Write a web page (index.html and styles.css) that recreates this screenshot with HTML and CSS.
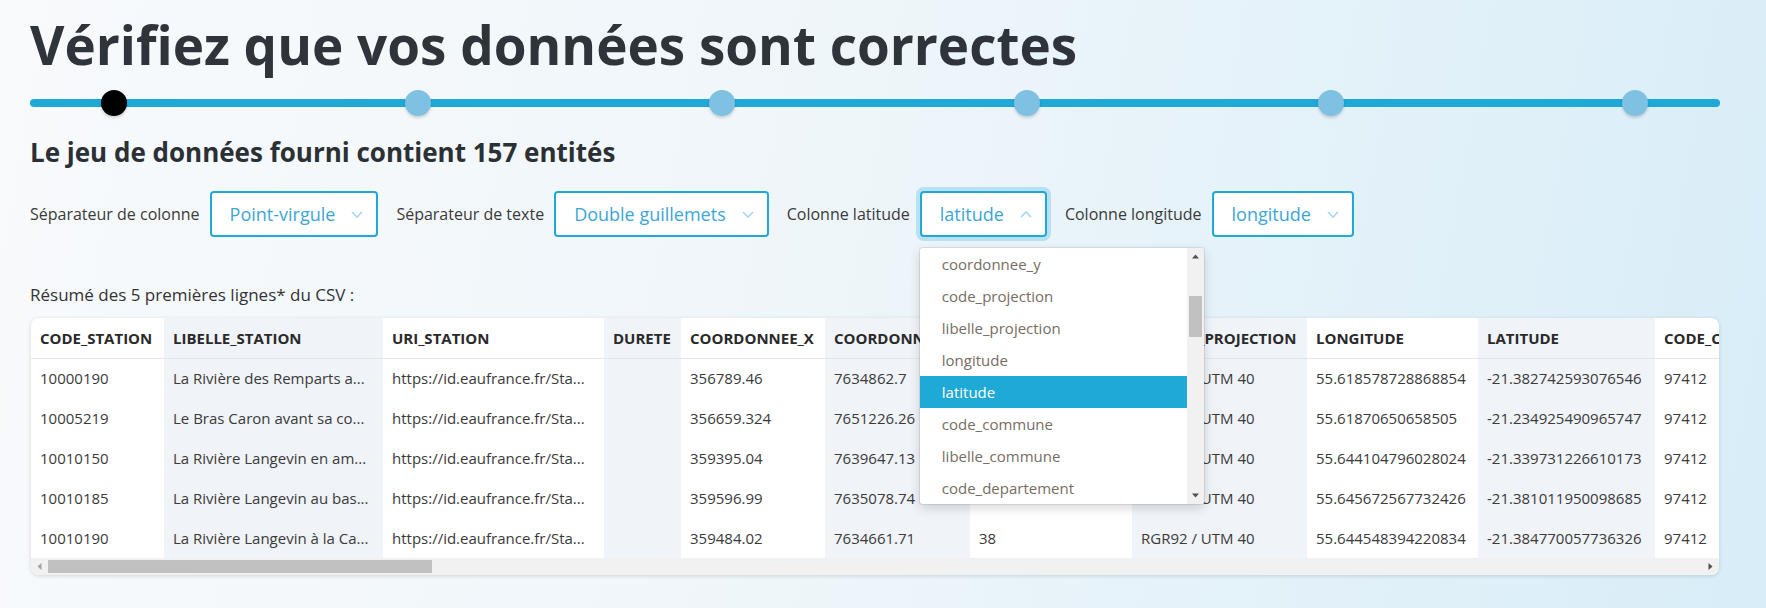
FILE: index.html
```html
<!DOCTYPE html>
<html lang="fr">
<head>
<meta charset="utf-8">
<title>Vérifiez vos données</title>
<link rel="stylesheet" href="styles.css">
</head>
<body>
<main class="page">
  <h1 class="title">Vérifiez que vos données sont correctes</h1>

  <div class="stepper">
    <span class="dot dot-current"></span>
    <span class="dot"></span>
    <span class="dot"></span>
    <span class="dot"></span>
    <span class="dot"></span>
    <span class="dot"></span>
  </div>

  <h2 class="subtitle">Le jeu de données fourni contient 157 entités</h2>

  <div class="filters">
    <span class="flabel">Séparateur de colonne</span>
    <div class="select">
      <span class="select-value">Point-virgule</span>
      <svg class="chev" viewBox="0 0 12 7"><path d="M1 1l5 5 5-5"/></svg>
    </div>

    <span class="flabel">Séparateur de texte</span>
    <div class="select">
      <span class="select-value">Double guillemets</span>
      <svg class="chev" viewBox="0 0 12 7"><path d="M1 1l5 5 5-5"/></svg>
    </div>

    <span class="flabel">Colonne latitude</span>
    <div class="select-wrap">
      <div class="select select-open">
        <span class="select-value">latitude</span>
        <svg class="chev" viewBox="0 0 12 7"><path d="M1 6l5-5 5 5"/></svg>
      </div>
      <div class="listbox">
        <ul class="options">
          <li class="option">coordonnee_y</li>
          <li class="option">code_projection</li>
          <li class="option">libelle_projection</li>
          <li class="option">longitude</li>
          <li class="option option-selected">latitude</li>
          <li class="option">code_commune</li>
          <li class="option">libelle_commune</li>
          <li class="option">code_departement</li>
        </ul>
        <div class="vscroll">
          <span class="sb-btn"><svg viewBox="0 0 17 17"><path d="M5 10.5h7L8.5 6.5z"/></svg></span>
          <span class="vtrack"><span class="vthumb"></span></span>
          <span class="sb-btn"><svg viewBox="0 0 17 17"><path d="M5 6.5h7L8.5 10.5z"/></svg></span>
        </div>
      </div>
    </div>

    <span class="flabel">Colonne longitude</span>
    <div class="select">
      <span class="select-value">longitude</span>
      <svg class="chev" viewBox="0 0 12 7"><path d="M1 1l5 5 5-5"/></svg>
    </div>
  </div>

  <p class="summary">Résumé des 5 premières lignes* du CSV :</p>

  <div class="table-card">
    <div class="table-clip">
      <table class="data">
        <colgroup>
          <col class="w1"><col class="w2"><col class="w3"><col class="w4"><col class="w5"><col class="w6">
          <col class="w7"><col class="w8"><col class="w9"><col class="w10"><col class="w11">
        </colgroup>
        <thead>
          <tr>
            <th>CODE_STATION</th><th>LIBELLE_STATION</th><th>URI_STATION</th><th>DURETE</th>
            <th>COORDONNEE_X</th><th>COORDONNEE_Y</th><th>CODE_PROJECTION</th><th>LIBELLE_PROJECTION</th>
            <th>LONGITUDE</th><th>LATITUDE</th><th>CODE_COMMUNE</th>
          </tr>
        </thead>
        <tbody>
          <tr>
            <td>10000190</td><td>La Rivière des Remparts a...</td><td>https://id.eaufrance.fr/Sta...</td><td></td>
            <td>356789.46</td><td>7634862.7</td><td>38</td><td>RGR92 / UTM 40</td>
            <td>55.618578728868854</td><td>-21.382742593076546</td><td>97412</td>
          </tr>
          <tr>
            <td>10005219</td><td>Le Bras Caron avant sa co...</td><td>https://id.eaufrance.fr/Sta...</td><td></td>
            <td>356659.324</td><td>7651226.26</td><td>38</td><td>RGR92 / UTM 40</td>
            <td>55.61870650658505</td><td>-21.234925490965747</td><td>97412</td>
          </tr>
          <tr>
            <td>10010150</td><td>La Rivière Langevin en am...</td><td>https://id.eaufrance.fr/Sta...</td><td></td>
            <td>359395.04</td><td>7639647.13</td><td>38</td><td>RGR92 / UTM 40</td>
            <td>55.644104796028024</td><td>-21.339731226610173</td><td>97412</td>
          </tr>
          <tr>
            <td>10010185</td><td>La Rivière Langevin au bas...</td><td>https://id.eaufrance.fr/Sta...</td><td></td>
            <td>359596.99</td><td>7635078.74</td><td>38</td><td>RGR92 / UTM 40</td>
            <td>55.645672567732426</td><td>-21.381011950098685</td><td>97412</td>
          </tr>
          <tr>
            <td>10010190</td><td>La Rivière Langevin à la Ca...</td><td>https://id.eaufrance.fr/Sta...</td><td></td>
            <td>359484.02</td><td>7634661.71</td><td>38</td><td>RGR92 / UTM 40</td>
            <td>55.644548394220834</td><td>-21.384770057736326</td><td>97412</td>
          </tr>
        </tbody>
      </table>
    </div>
    <div class="hscroll">
      <span class="sb-btn sb-disabled"><svg viewBox="0 0 17 17"><path d="M10.5 5v7L6.5 8.5z"/></svg></span>
      <span class="htrack"><span class="hthumb"></span></span>
      <span class="sb-btn"><svg viewBox="0 0 17 17"><path d="M6.5 5v7l4-3.5z"/></svg></span>
    </div>
  </div>
</main>
</body>
</html>
```

FILE: styles.css
```css
* { box-sizing: border-box; }

html, body { margin: 0; }

body {
  width: 1766px;
  height: 608px;
  overflow: hidden;
  font-family: "Open Sans", "Liberation Sans", sans-serif;
  color: #333;
  background: linear-gradient(100deg, #f8fafc 0%, #eff6fa 45%, #d8edf8 100%);
}

.page {
  padding: 15px 46px 0 30px;
}

.title {
  margin: 0;
  font-size: 53px;
  line-height: 60px;
  font-weight: 700;
  color: #2e343a;
}

/* stepper */
.stepper {
  position: relative;
  display: flex;
  justify-content: space-between;
  height: 26px;
  margin-top: 15px;
  padding: 0 72px 0 71px;
}
.stepper::before {
  content: "";
  position: absolute;
  left: 0;
  right: 0;
  top: 9px;
  height: 8px;
  border-radius: 4px;
  background: #1fa9d6;
}
.dot {
  position: relative;
  width: 26px;
  height: 26px;
  border-radius: 50%;
  background: #7ec1e3;
  box-shadow: 0 2px 3px rgba(0, 0, 0, 0.16);
}
.dot-current { background: #000; }

.subtitle {
  margin: 20px 0 0;
  font-size: 26px;
  line-height: 33px;
  font-weight: 700;
  color: #2b3034;
}

/* filters */
.filters {
  display: flex;
  align-items: center;
  height: 46px;
  margin-top: 22px;
}
.flabel {
  font-size: 16px;
  color: #3a3a3a;
  margin-right: 10px;
  white-space: nowrap;
}
.select {
  display: flex;
  align-items: center;
  height: 46px;
  padding: 0 13px 0 18px;
  margin-right: 18px;
  background: #fff;
  border: 2px solid #1fa9d6;
  border-radius: 4px;
}
.select-value {
  font-size: 18px;
  line-height: 24px;
  color: #3ba6d8;
  white-space: nowrap;
}
.chev {
  width: 12px;
  height: 7px;
  margin-left: 16px;
  fill: none;
  stroke: #a3d7ee;
  stroke-width: 1.6;
}
.select-wrap {
  position: relative;
  margin-right: 18px;
}
.select-wrap .select {
  margin-right: 0;
  box-shadow: 0 0 0 4px rgba(31, 169, 214, 0.25);
}

/* dropdown listbox */
.listbox {
  position: absolute;
  z-index: 10;
  top: 57px;
  left: 0;
  width: 284px;
  height: 256px;
  display: flex;
  background: #fff;
  border-radius: 3px;
  box-shadow: 0 0 0 1px rgba(0, 0, 0, 0.08), 0 4px 12px rgba(0, 0, 0, 0.16);
  overflow: hidden;
}
.options {
  flex: 1;
  margin: 0;
  padding: 0;
  list-style: none;
}
.option {
  height: 32px;
  line-height: 32px;
  padding-left: 22px;
  font-size: 15px;
  color: #776d63;
}
.option-selected {
  background: #1fa9d6;
  color: #fff;
}
.vscroll {
  width: 17px;
  display: flex;
  flex-direction: column;
  background: #f1f1f1;
}
.sb-btn {
  display: block;
  width: 17px;
  height: 17px;
  flex: none;
}
.sb-btn svg {
  display: block;
  width: 17px;
  height: 17px;
  fill: #505050;
}
.sb-disabled svg { fill: #a3a3a3; }
.vtrack {
  flex: 1;
  padding-top: 31px;
}
.vthumb {
  display: block;
  width: 13px;
  height: 41px;
  margin: 0 auto;
  background: #c1c1c1;
}

/* summary + table */
.summary {
  margin: 46px 0 0;
  font-size: 17px;
  line-height: 24px;
  color: #333;
}
.table-card {
  margin: 11px 1px 0 1px;
  background: #fff;
  border-radius: 8px;
  box-shadow: 0 1px 4px rgba(0, 0, 0, 0.14);
  overflow: hidden;
}
.table-clip { overflow: hidden; }
.data {
  table-layout: fixed;
  border-collapse: collapse;
  width: 1785px;
}
.data col:nth-child(even) { background: #f0f3f8; }
.w1 { width: 133px; }
.w2 { width: 219px; }
.w3 { width: 221px; }
.w4 { width: 77px; }
.w5 { width: 144px; }
.w6 { width: 145px; }
.w7 { width: 162px; }
.w8 { width: 175px; }
.w9 { width: 171px; }
.w10 { width: 177px; }
.w11 { width: 161px; }
.data th,
.data td {
  height: 40px;
  padding: 0 9px;
  text-align: left;
  white-space: nowrap;
  overflow: hidden;
  text-overflow: ellipsis;
}
.data th {
  font-size: 15px;
  font-weight: 700;
  color: #2a2a2a;
  border-bottom: 1px solid #e3e6ea;
}
.data td {
  font-size: 15px;
  color: #3a3a3a;
}
.hscroll {
  display: flex;
  height: 17px;
  background: #f1f1f1;
}
.htrack {
  flex: 1;
  padding-top: 2px;
}
.hthumb {
  display: block;
  width: 384px;
  height: 13px;
  background: #c1c1c1;
}
```
